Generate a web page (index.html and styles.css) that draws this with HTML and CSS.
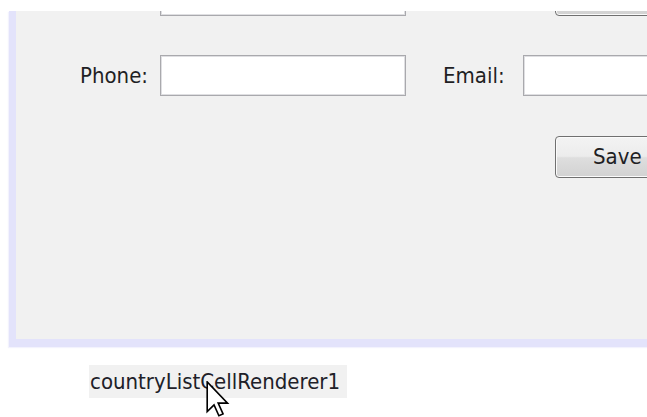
FILE: index.html
```html
<!DOCTYPE html>
<html>
<head>
<meta charset="utf-8">
<title>Contact form</title>
<link rel="stylesheet" href="styles.css">
</head>
<body>
  <div class="panel">
    <div class="row row-top">
      <div class="field field-short"></div>
      <div class="button button-top"></div>
    </div>
    <div class="row row-contact">
      <label class="label label-phone">Phone:</label>
      <div class="field field-short"></div>
      <label class="label label-email">Email:</label>
      <div class="field field-long"></div>
    </div>
    <div class="row row-actions">
      <div class="button">Save</div>
    </div>
  </div>
  <div class="renderer-name">countryListCellRenderer1</div>
  <svg class="cursor" width="24" height="36" viewBox="0 0 13 20">
    <path d="M0.5 0.5 L0.5 17 L4.3 13.3 L7 19.3 L9.3 18.3 L6.6 12.3 L11.8 12.3 Z" fill="#fff" stroke="#000" stroke-width="0.9" stroke-linejoin="miter"/>
  </svg>
</body>
</html>
```
FILE: styles.css
```css
html, body {
  margin: 0;
  padding: 0;
  background: #ffffff;
  overflow: hidden;
  width: 647px;
  height: 417px;
}

body {
  font-family: "DejaVu Sans Condensed", "DejaVu Sans", sans-serif;
  font-stretch: condensed;
  font-size: 22px;
  color: #1f1f24;
  position: relative;
}

.panel {
  margin: 11px 0 0 9px;
  width: 720px;
  height: 328px;
  background: #f1f1f1;
  border-left: 7px solid #e3e3fb;
  border-bottom: 8px solid #e3e3fb;
  overflow: hidden;
  box-shadow: -1px 1px 1px #f3f3fd;
}

.row {
  display: flex;
  align-items: center;
}

/* the first row is scrolled partly out of view above the panel */
.row-top {
  margin-top: -36px;
  padding-left: 144px;
}

.row-contact {
  margin-top: 39px;
}

.row-actions {
  margin-top: 40px;
  padding-left: 539px;
}

.field {
  box-sizing: border-box;
  height: 41px;
  background: #ffffff;
  border: 1px solid #a9a9ad;
  box-shadow: inset 0 0 0 1px #dfdfe2;
}

.field-short {
  width: 246px;
}

.field-long {
  width: 200px;
}

.label {
  display: block;
  line-height: 41px;
}

.label-phone {
  width: 144px;
  padding-right: 12px;
  box-sizing: border-box;
  text-align: right;
}

.label-email {
  width: 80px;
  margin-left: 37px;
}

.button {
  box-sizing: border-box;
  width: 130px;
  height: 42px;
  line-height: 40px;
  padding-left: 37px;
  border: 1px solid #707070;
  border-radius: 4px;
  background: linear-gradient(#f3f3f3 0%, #ececec 48%, #dedede 52%, #d2d2d2 100%);
  box-shadow: inset 0 0 0 1px #fbfbfb;
}

.button-top {
  height: 41px;
  margin-left: 149px;
}

.renderer-name {
  display: inline-block;
  margin: 18px 0 0 89px;
  height: 33px;
  line-height: 33px;
  padding: 0 7px 0 1px;
  background: #f1f1f1;
  color: #202028;
}

.cursor {
  position: absolute;
  left: 206px;
  top: 381px;
}
```
